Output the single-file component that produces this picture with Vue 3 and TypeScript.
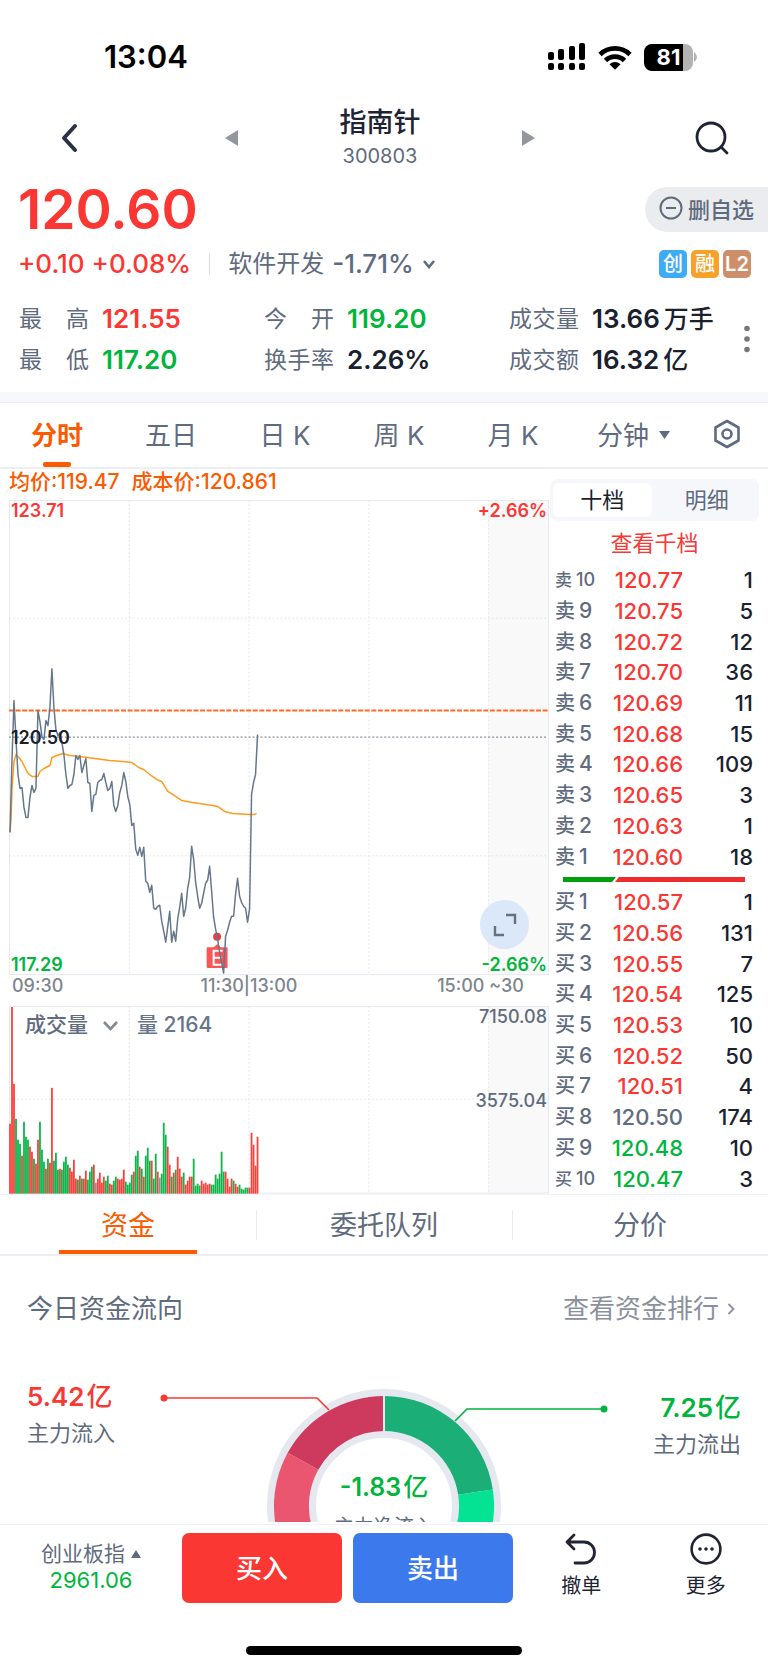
<script setup lang="ts">
import { ref } from 'vue'

type Tone = 'up' | 'down' | 'flat'
interface Level { side: string; rank: number; price: string; qty: number; tone: Tone }

const PREV_CLOSE = 120.5

const makeLevels = (side: string, rows: [number, string, number][]): Level[] =>
  rows.map(([rank, price, qty]) => ({
    side, rank, price, qty,
    tone: +price > PREV_CLOSE ? 'up' : +price < PREV_CLOSE ? 'down' : 'flat',
  }))

const books = [
  makeLevels('卖', [
    [10, '120.77', 1], [9, '120.75', 5], [8, '120.72', 12], [7, '120.70', 36], [6, '120.69', 11],
    [5, '120.68', 15], [4, '120.66', 109], [3, '120.65', 3], [2, '120.63', 1], [1, '120.60', 18],
  ]),
  makeLevels('买', [
    [1, '120.57', 1], [2, '120.56', 131], [3, '120.55', 7], [4, '120.54', 125], [5, '120.53', 10],
    [6, '120.52', 50], [7, '120.51', 4], [8, '120.50', 174], [9, '120.48', 10], [10, '120.47', 3],
  ]),
]

const stats = [
  { label: '最高', value: '121.55', unit: '', tone: 'up' },
  { label: '今开', value: '119.20', unit: '', tone: 'down' },
  { label: '成交量', value: '13.66', unit: '万手', tone: 'ink' },
  { label: '最低', value: '117.20', unit: '', tone: 'down' },
  { label: '换手率', value: '2.26%', unit: '', tone: 'ink' },
  { label: '成交额', value: '16.32', unit: '亿', tone: 'ink' },
]

const periods = ['分时', '五日', '日 K', '周 K', '月 K']
const period = ref('分时')
const bookTab = ref('十档')
const panels = ['资金', '委托队列', '分价']
const panel = ref('资金')

// one sample per minute, two chart units apart
const trend = [
  333, 260, 201, 240, 275, 289, 288, 308, 318, 318, 298, 286, 293, 289, 211, 222, 237, 240, 221, 226,
  208, 169, 208, 230, 236, 233, 243, 255, 275, 289, 286, 285, 275, 256, 260, 256, 273, 266, 259, 283,
  284, 312, 296, 295, 283, 281, 280, 274, 283, 291, 289, 282, 306, 312, 306, 293, 286, 273, 282, 297,
  305, 326, 324, 350, 356, 348, 357, 348, 382, 384, 393, 386, 409, 410, 407, 406, 422, 432, 443, 428,
  412, 443, 432, 442, 420, 408, 394, 417, 409, 389, 378, 347, 360, 383, 397, 409, 404, 394, 384, 381,
  367, 392, 418, 430, 440, 453, 463, 474, 437, 431, 423, 417, 417, 395, 379, 397, 403, 407, 409, 423,
  410, 295, 283, 275, 235,
]
const trendPoints = trend.map((y, i) => `${i * 2 + 1},${y}`).join(' ')

const averagePoints =
  '1,333 2,320 3,290 5,262 7,255 10,258 13,262 18,272 20,275 23,277 29,277 31,272 35,269 41,266 43,258 48,256 54,254 61,256 71,257 79,258 86,259 101,261 114,262 123,263 126,265 130,268 135,270 141,275 148,280 153,282 159,292 164,295 173,301 184,303 204,306 209,307 216,312 224,314 241,315 246,315 248,314'

const volumes =
  'r70 r187 r110 g75 g54 g50 r38 g72 g57 g54 r47 r42 g35 r30 r54 g72 g44 g32 r25 g35 r31 r106 g33 g41 g24 r25 g24 g32 g37 g29 r26 r22 r34 r15 g14 r18 g15 r15 r23 g14 g22 g27 r29 n11 r15 r21 r11 r17 g13 g18 r10 r9 g13 g17 r15 r14 r15 r24 g12 g9 g11 g19 r22 g38 g43 r27 g25 r17 g38 g46 g33 r33 g15 g40 r22 n16 g20 g71 g59 r47 r29 g17 r21 g24 r37 r25 r17 g21 r9 r13 r17 r17 g35 g8 g10 g8 r13 r10 r11 r9 r10 g9 g9 g19 g15 g20 g42 g22 r22 r15 r7 r15 g13 r10 r7 g9 g5 g4 g6 g6 r6 r61 r49 r28 r57'
    .split(' ')
    .map((s, i) => ({ x: i * 2, h: Number(s.slice(1)), cls: `bar-${s[0]}` }))
</script>

<template>
  <div class="page">
    <header class="status">
      <span class="clock">13:04</span>
      <div class="status-icons">
        <svg width="39" height="28" viewBox="0 0 39 28" aria-hidden="true">
          <g fill="#000">
            <rect x="1" y="9" width="6" height="8" rx="2" /><rect x="11" y="6" width="6" height="11" rx="2" />
            <rect x="22" y="3" width="6" height="14" rx="2" /><rect x="32" y="0" width="6" height="17" rx="2" />
            <rect x="1" y="20" width="6" height="7" rx="2" /><rect x="11" y="20" width="6" height="7" rx="2" />
            <rect x="22" y="20" width="6" height="7" rx="2" /><rect x="32" y="20" width="6" height="7" rx="2" />
          </g>
        </svg>
        <svg width="34" height="25" viewBox="0 0 34 25" aria-hidden="true">
          <g fill="none" stroke="#000" stroke-width="4.800">
            <path d="M2 9.5a21.5 21.5 0 0 1 30 0" /><path d="M7.5 15.5a13.5 13.5 0 0 1 19 0" />
          </g>
          <path d="M11.5 19.2a8 8 0 0 1 11 0L17 24.8z" fill="#000" />
        </svg>
        <div class="battery"><span>81</span><svg width="5" height="10" viewBox="0 0 5 10" aria-hidden="true"><path d="M1 0q3 2 3 5t-3 5z" fill="#b3b3b3" /></svg></div>
      </div>
    </header>

    <nav class="nav">
      <button class="icon-btn back" aria-label="返回">
        <svg width="20" height="30" viewBox="0 0 20 30"><path d="M16 3 5 15l11 12" fill="none" stroke="#2a3144" stroke-width="4" stroke-linecap="round" stroke-linejoin="round" /></svg>
      </button>
      <div class="switcher">
        <button class="icon-btn" aria-label="上一只">
          <svg width="13" height="16" viewBox="0 0 13 16"><path d="M0 8 13 0v16z" fill="#92979c" /></svg>
        </button>
        <div class="title"><h1>指南针</h1><p>300803</p></div>
        <button class="icon-btn" aria-label="下一只">
          <svg width="13" height="16" viewBox="0 0 13 16"><path d="M13 8 0 0v16z" fill="#92979c" /></svg>
        </button>
      </div>
      <button class="icon-btn search" aria-label="搜索">
        <svg width="34" height="34" viewBox="0 0 34 34"><g fill="none" stroke="#1f2433" stroke-width="2.8" stroke-linecap="round"><circle cx="16" cy="16" r="14" /><path d="m26 26 6 6" /></g></svg>
      </button>
    </nav>

    <section class="quote">
      <div class="price-row">
        <strong class="price up">120.60</strong>
        <button class="remove">
          <svg width="24" height="24" viewBox="0 0 24 24" aria-hidden="true"><g fill="none" stroke="#5f6b7e" stroke-width="2"><circle cx="12" cy="12" r="10.5" /><path d="M7 12h10" /></g></svg>
          删自选
        </button>
      </div>
      <div class="change-row">
        <span class="change up">+0.10 +0.08%</span>
        <i class="rule"></i>
        <button class="sector">软件开发 <b>-1.71%</b>
          <svg width="14" height="10" viewBox="0 0 14 10" aria-hidden="true"><path d="m2 2 5 6 5-6" fill="none" stroke="#5f6b7e" stroke-width="2.6" /></svg>
        </button>
        <div class="badges"><span class="b-blue">创</span><span class="b-amber">融</span><span class="b-tan">L2</span></div>
      </div>
      <div class="stats-wrap">
        <dl class="stats">
          <div v-for="s in stats" :key="s.label"><dt>{{ s.label }}</dt><dd :class="s.tone">{{ s.value }}<em v-if="s.unit">{{ s.unit }}</em></dd></div>
        </dl>
        <button class="icon-btn dots" aria-label="更多指标">
          <svg width="6" height="28" viewBox="0 0 6 28"><g fill="#777"><circle cx="3" cy="3.5" r="2.8" /><circle cx="3" cy="14" r="2.8" /><circle cx="3" cy="24.500" r="2.8" /></g></svg>
        </button>
      </div>
    </section>

    <div class="periods">
      <button v-for="p in periods" :key="p" :class="{ on: p === period }" @click="period = p">{{ p }}</button>
      <label class="minute">
        <select aria-label="分钟周期"><option>分钟</option></select>
        <svg width="11" height="8" viewBox="0 0 11 8" aria-hidden="true"><path d="M0 0h11L5.500 8z" fill="#5f6b7e" /></svg>
      </label>
      <button class="settings" aria-label="图表设置">
        <svg width="28" height="30" viewBox="0 0 28 30"><g fill="none" stroke="#5f6b7e" stroke-width="2.6" stroke-linejoin="round"><path d="m14 2 11.500 6.500v13L14 28 2.500 21.500v-13z" /><circle cx="14" cy="15" r="4.500" /></g></svg>
      </button>
    </div>

    <main class="market">
      <div class="charts">
        <p class="legend"><span>均价:119.47</span><span>成本价:120.861</span></p>
        <div class="plot">
          <svg viewBox="0 0 541 476" role="img" aria-label="分时走势">
            <rect x="480" y="0" width="60" height="475" fill="#f9f9fa" />
            <g class="grid-lines"><path d="M120.500 0v475M240.500 0v475M360.500 0v475M480.500 0v475M0 118.500h540M0 356.500h540" /></g>
            <rect x="0.500" y="0.500" width="540" height="475" class="frame" />
            <path d="M0 237.500h540" stroke="#8c929d" stroke-width="1.300" stroke-dasharray="2 2" />
            <path d="M0 211h540" stroke="#ff6a26" stroke-width="2" stroke-dasharray="5 1.600" />
            <polyline :points="averagePoints" fill="none" stroke="#ff9c1a" stroke-width="1.500" stroke-linejoin="round" />
            <circle cx="208.500" cy="437.500" r="4" fill="#f5393b" />
            <path d="M199 448h6l3.500-3 3.500 3h6a1 1 0 0 1 1 1v19a1 1 0 0 1-1 1h-19a1 1 0 0 1-1-1v-19a1 1 0 0 1 1-1z" fill="#fb5557" />
            <path d="M214 451.500h-9v14h9M205 458.500h8" fill="none" stroke="#fff" stroke-width="2" />
            <polyline :points="trendPoints" fill="none" stroke="#66778b" stroke-width="1.500" stroke-linejoin="round" />
          </svg>
          <span class="tag tl up">123.71</span>
          <span class="tag tr up">+2.66%</span>
          <span class="tag mid">120.50</span>
          <span class="tag bl down">117.29</span>
          <span class="tag br down">-2.66%</span>
          <button class="expand" aria-label="全屏">
            <svg width="24" height="24" viewBox="0 0 24 24"><path d="M13 2h9v9M2 13v9h9" fill="none" stroke="#66717f" stroke-width="2.400" /></svg>
          </button>
        </div>
        <div class="axis"><span>09:30</span><span>11:30|13:00</span><span>15:00 ~30</span></div>
        <div class="plot volume">
          <svg viewBox="0 0 541 188" role="img" aria-label="成交量">
            <rect x="480" y="0" width="60" height="187" fill="#f9f9fa" />
            <g class="grid-lines"><path d="M120.500 0v187M240.500 0v187M360.500 0v187M480.500 0v187M0 93.500h540" /></g>
            <rect x="0.500" y="0.500" width="540" height="187" class="frame" />
            <rect v-for="v in volumes" :key="v.x" :x="v.x + 0.1" :y="188 - v.h" width="1.800" :height="v.h" :class="v.cls" />
          </svg>
          <div class="vol-head">
            <label><select aria-label="副图指标"><option>成交量</option></select>
              <svg width="17" height="11" viewBox="0 0 17 11" aria-hidden="true"><path d="m2 2 6.500 7L15 2" fill="none" stroke="#848b94" stroke-width="2.600" /></svg>
            </label>
            <span>量 2164</span>
          </div>
          <span class="tag vmax">7150.08</span>
          <span class="tag vmid">3575.04</span>
        </div>
      </div>

      <aside class="book">
        <div class="seg">
          <button v-for="t in ['十档', '明细']" :key="t" :class="{ on: t === bookTab }" @click="bookTab = t">{{ t }}</button>
        </div>
        <a class="deep up" href="#">查看千档</a>
        <template v-for="(rows, b) in books" :key="b">
          <svg v-if="b === 1" class="ratio" viewBox="0 0 182 5" preserveAspectRatio="none" aria-hidden="true"><path d="M0 0h53l-4 5H0z" fill="#009f0d" /><path d="M56 0h126v5H52z" fill="#ee2b2d" /></svg>
          <table>
            <tbody>
              <tr v-for="r in rows" :key="r.rank">
                <th scope="row" :class="{ small: r.rank === 10 }">{{ r.side }}<span>{{ r.rank }}</span></th>
                <td :class="r.tone">{{ r.price }}</td>
                <td class="ink">{{ r.qty }}</td>
              </tr>
            </tbody>
          </table>
        </template>
      </aside>
    </main>

    <div class="panels">
      <button v-for="p in panels" :key="p" :class="{ on: p === panel }" @click="panel = p">{{ p }}</button>
    </div>

    <section class="flow">
      <div class="flow-head">
        <h2>今日资金流向</h2>
        <a href="#">查看资金排行
          <svg width="9" height="14" viewBox="0 0 9 14" aria-hidden="true"><path d="m1.500 2 5 5-5 5" fill="none" stroke="#8a919c" stroke-width="1.800" /></svg>
        </a>
      </div>
      <div class="donut">
        <svg viewBox="0 0 768 194" role="img" aria-label="资金流向">
          <circle cx="384" cy="177" r="92.500" fill="none" stroke="#e5e8ef" stroke-width="49" />
          <path d="M384 67A110 110 0 0 0 287.700 123.800L318.300 140.700A75 75 0 0 1 384 102z" fill="#cd3a5e" />
          <path d="M287.700 123.800A110 110 0 0 0 384 287V252A75 75 0 0 1 318.300 140.700z" fill="#ea5570" />
          <path d="M384 67A110 110 0 0 1 492.800 160.500L458.200 165.800A75 75 0 0 0 384 102z" fill="#1cae77" />
          <path d="M492.800 160.500A110 110 0 0 1 384 287V252A75 75 0 0 0 458.200 165.800z" fill="#04e294" />
          <path d="M384 66v37" stroke="#e5e8ef" stroke-width="2" />
          <g fill="none" stroke-width="1.600"><path d="M164 69h153l12 12" stroke="#fa3733" /><path d="M604 80H467l-12 12" stroke="#00b33f" /></g>
          <circle cx="164" cy="69" r="3.500" fill="#fa3733" /><circle cx="604" cy="80" r="3.500" fill="#00b33f" />
        </svg>
        <div class="note in"><strong class="up">5.42<em>亿</em></strong><span>主力流入</span></div>
        <div class="note net"><strong class="down">-1.83<em>亿</em></strong><span>主力净流入</span></div>
        <div class="note out"><strong class="down">7.25<em>亿</em></strong><span>主力流出</span></div>
      </div>
    </section>

    <footer class="dock">
      <div class="dock-row">
        <button class="index">
          <span>创业板指<svg width="10" height="8" viewBox="0 0 10 8" aria-hidden="true"><path d="M5 0l5 8H0z" fill="#5f6b7e" /></svg></span>
          <b class="down">2961.06</b>
        </button>
        <div class="trade"><button class="buy">买入</button><button class="sell">卖出</button></div>
        <div class="tools">
          <button>
            <svg width="32" height="32" viewBox="0 0 32 32" aria-hidden="true"><path d="M9 2 2 9l7 7M2.500 9H19a10.500 10.500 0 0 1 0 21h-9" fill="none" stroke="#1f2433" stroke-width="2.800" stroke-linecap="round" stroke-linejoin="round" /></svg>
            撤单
          </button>
          <button>
            <svg width="32" height="32" viewBox="0 0 32 32" aria-hidden="true"><circle cx="16" cy="16" r="14.400" fill="none" stroke="#1f2433" stroke-width="2.600" /><g fill="#1f2433"><circle cx="10" cy="16" r="1.800" /><circle cx="16" cy="16" r="1.800" /><circle cx="22" cy="16" r="1.800" /></g></svg>
            更多
          </button>
        </div>
      </div>
      <div class="home"></div>
    </footer>
  </div>
</template>

<style>
body { margin: 0; background: #fff; }
</style>

<style scoped>
.page {
  display: flex; flex-direction: column; min-height: 100vh; overflow: hidden;
  background: #fff; color: #5f6b7e;
  font-family: Inter, "Noto Sans CJK SC", sans-serif; font-size: 24px;
}
.page * { box-sizing: border-box; }
button, select { font: inherit; color: inherit; background: none; border: 0; padding: 0; margin: 0; cursor: pointer; }
select { appearance: none; }
h1, h2, p, dl, dd { margin: 0; }
a { text-decoration: none; color: inherit; }
em, i { font-style: normal; }
svg { display: block; flex: none; }
.up { color: #fa3733; }
.down { color: #00b53c; }
.flat { color: #5f6b7e; }
.ink { color: #1b1f2e; }

.status { display: flex; justify-content: space-between; align-items: center; padding: 37px 70px 0 104px; color: #000; }
.clock { font-size: 31px; line-height: 40px; font-weight: 600; }
.status-icons { display: flex; align-items: center; gap: 12px; }
.battery { display: flex; align-items: center; }
.battery span {
  width: 49px; height: 27px; line-height: 27px; border-radius: 8px; text-align: center; color: #fff;
  background: linear-gradient(90deg, #000 80%, #b3b3b3 80%); font-size: 22px; font-weight: 700;
}

.nav { display: grid; grid-template-columns: 1fr 310px 1fr; align-items: center; padding: 30px 39px 13px 31px; }
.switcher { display: flex; justify-content: space-between; align-items: center; }
.title { text-align: center; }
.icon-btn { display: flex; align-items: center; }
.back { padding-left: 28px; }
.search { justify-self: end; }
h1 { font-size: 27px; line-height: 32px; font-weight: 500; color: #1f2433; }
.title p { font-size: 20px; line-height: 24px; margin-top: 5px; }

.price-row { display: flex; justify-content: space-between; align-items: center; padding-left: 18px; }
.price { font-size: 55px; line-height: 56px; font-weight: 600; }
.remove {
  display: flex; align-items: center; gap: 5px; height: 45px; padding: 0 14px 2px; font-size: 22px; font-weight: 500;
  border-radius: 23px 0 0 23px; background: #ebecee;
}
.change-row { display: flex; align-items: center; padding: 11px 17px 0 18px; line-height: 32px; }
.change { font-size: 26px; font-weight: 500; }
.rule { width: 1px; height: 22px; background: #d5dce6; margin: 0 18px; }
.sector { display: flex; align-items: center; gap: 8px; }
.sector b { font-weight: 500; font-size: 26px; }
.badges { display: flex; gap: 4px; margin-left: auto; }
.badges span { width: 28px; height: 28px; line-height: 28px; border-radius: 5px; text-align: center; color: #fff; font-size: 20px; font-weight: 500; }
.badges .b-tan { font-weight: 600; }
.b-blue { background: #3eabf5; }
.b-amber { background: #f8a028; }
.b-tan { background: #cd8f6a; }

.stats-wrap { position: relative; padding: 19px 14px 12px 19px; border-bottom: 10px solid #f7f8fb; }
.stats { display: grid; grid-template-columns: repeat(3, 1fr); row-gap: 1px; line-height: 40px; }
.stats div { display: flex; gap: 13px; white-space: nowrap; }
dt { width: 70px; font-size: 23px; text-align-last: justify; }
dd { font-weight: 600; font-size: 26px; }
dd em { margin-left: 4px; font-weight: 500; font-size: 25px; }
.dots { position: absolute; right: 18px; bottom: 39px; }

.periods {
  display: grid; grid-template-columns: repeat(5, 114fr) 127fr 71fr; align-items: stretch; height: 67px;
  border-top: 1px solid #eceef4; border-bottom: 2px solid #eceef4; font-size: 26px;
}
.periods > button { position: relative; display: flex; justify-content: center; align-items: center; white-space: nowrap; padding-bottom: 3px; }
.periods .on { color: #fa5a00; font-weight: 700; }
.periods .on::after { content: ""; position: absolute; bottom: 0; left: calc(50% - 14px); width: 28px; height: 5px; border-radius: 2px; background: #fa5a00; }
.minute { display: flex; align-items: center; justify-content: center; gap: 9px; }
.periods > .settings { justify-content: flex-start; padding-left: 16px; }

.market { display: grid; grid-template-columns: 550fr 218fr; }
.charts { padding-left: 9px; min-width: 0; }
.legend { display: flex; gap: 12px; height: 31px; font-size: 21px; line-height: 26px; font-weight: 500; color: #fa5a00; white-space: nowrap; }
.plot { position: relative; }
.plot > svg { width: 100%; height: auto; overflow: visible; }
.frame { fill: none; stroke: #e6e9f2; stroke-width: 1; }
.grid-lines path { stroke: #e6e8ee; stroke-width: 1; stroke-dasharray: 2 2; }
.tag { position: absolute; font-size: 18px; line-height: 20px; font-weight: 600; }
.tl { left: 2px; top: 1px; }
.tr { right: 2px; top: 1px; }
.mid { left: 2px; top: 228px; color: #1b1f2e; }
.bl { left: 2px; bottom: 0; }
.br { right: 2px; bottom: 0; }
.expand {
  position: absolute; right: 20px; bottom: 26px; width: 49px; height: 49px; border-radius: 50%;
  background: #dbe8f9; display: flex; align-items: center; justify-content: center;
}
.axis { display: grid; grid-template-columns: 1fr auto 1fr; height: 31px; line-height: 22px; padding: 0 25px 0 3px; font-size: 18px; font-weight: 500; color: #7d8590; }
.axis span:nth-child(2) { margin-right: 38px; }
.axis span:last-child { text-align: right; }
.bar-r { fill: #fa403c; }
.bar-g { fill: #0db54b; }
.bar-n { fill: #8c929d; }
.vol-head { position: absolute; top: 5px; left: 16px; display: flex; gap: 18px; font-size: 21px; line-height: 28px; font-weight: 500; color: #66758a; }
.vol-head label { display: flex; align-items: center; gap: 14px; }
.vol-head select { color: #5f6b7e; }
.vmax, .vmid { right: 2px; font-weight: 500; }
.vmax { top: 1px; }
.vmid { top: 85px; }

.book { padding: 10px 9px 0 1px; display: flex; flex-direction: column; }
.seg { display: flex; gap: 6px; height: 42px; padding: 4px 3px; border-radius: 7px; background: #f6f7fa; font-size: 22px; }
.seg button { flex: 1; border-radius: 6px; line-height: 34px; }
.seg .on { background: #fff; color: #1b1f2e; }
.deep { font-size: 22px; line-height: 44px; text-align: center; }
.ratio { height: 5px; margin: 5px 14px 5px 13px; width: auto; }
table { height: 307px; margin: 0 6px 0 5px; border-collapse: collapse; font-size: 22px; font-weight: 500; line-height: 24px; }
th { padding: 0; text-align: left; font-size: 20px; font-weight: 500; width: 48px; white-space: nowrap; }
th span { font-size: 21px; margin-left: 4px; }
th.small { font-size: 17px; }
th.small span { font-size: 18px; }
td { padding: 0; text-align: right; }
td:nth-child(2) { width: 80px; }

.panels { display: grid; grid-template-columns: repeat(3, 1fr); height: 62px; border-top: 1px solid #f1f2f6; border-bottom: 2px solid #eceef4; font-size: 27px; }
.panels button { position: relative; padding-bottom: 2px; }
.panels button + button::before { content: ""; position: absolute; left: 0; top: 15px; width: 1px; height: 30px; background: #e9ebf0; }
.panels .on { color: #fa5a00; }
.panels .on::after { content: ""; position: absolute; bottom: 0; left: 23%; right: 23%; height: 4px; background: #fa5a00; }

.flow { flex: 1; }
.flow-head { display: flex; justify-content: space-between; padding: 33px 32px 0 27px; line-height: 40px; }
h2 { font-size: 26px; font-weight: 400; }
.flow-head a { display: flex; align-items: center; gap: 8px; font-size: 26px; color: #8a919c; }
.donut { position: relative; height: 193px; overflow: hidden; }
.donut > svg { width: 100%; height: auto; }
.note { position: absolute; display: flex; flex-direction: column; font-size: 22px; line-height: 36px; white-space: nowrap; }
.note strong { font-size: 26px; font-weight: 600; }
.note em { font-weight: 500; margin-left: 2px; }
.in { left: 27px; top: 50px; }
.out { right: 27px; top: 61px; text-align: right; }
.net { left: 0; right: 0; top: 140px; text-align: center; font-size: 20px; line-height: 44px; }
.net strong { font-size: 25px; line-height: 36px; }

.dock { background: #fff; border-top: 1px solid #eff1f5; padding: 8px 0 14px; }
.dock-row { display: grid; grid-template-columns: 182fr 331fr 255fr; height: 70px; }
.index { display: flex; flex-direction: column; align-items: center; justify-content: center; font-size: 21px; line-height: 26px; padding-bottom: 2px; }
.index span { display: flex; align-items: center; gap: 6px; }
.index b { font-size: 22px; font-weight: 400; }
.trade { display: grid; grid-template-columns: 1fr 1fr; gap: 11px; }
.trade button { border-radius: 7px; color: #fff; font-size: 26px; font-weight: 500; padding-bottom: 3px; }
.buy { background: #fa3733; }
.sell { background: #3c79ec; }
.tools { display: grid; grid-template-columns: 1fr 1fr; padding-left: 6px; }
.tools button { display: flex; flex-direction: column; align-items: center; color: #1f2433; font-size: 20px; line-height: 28px; gap: 7px; }
.home { width: 36%; height: 9px; margin: 43px auto 0; border-radius: 5px; background: #000; }
</style>
